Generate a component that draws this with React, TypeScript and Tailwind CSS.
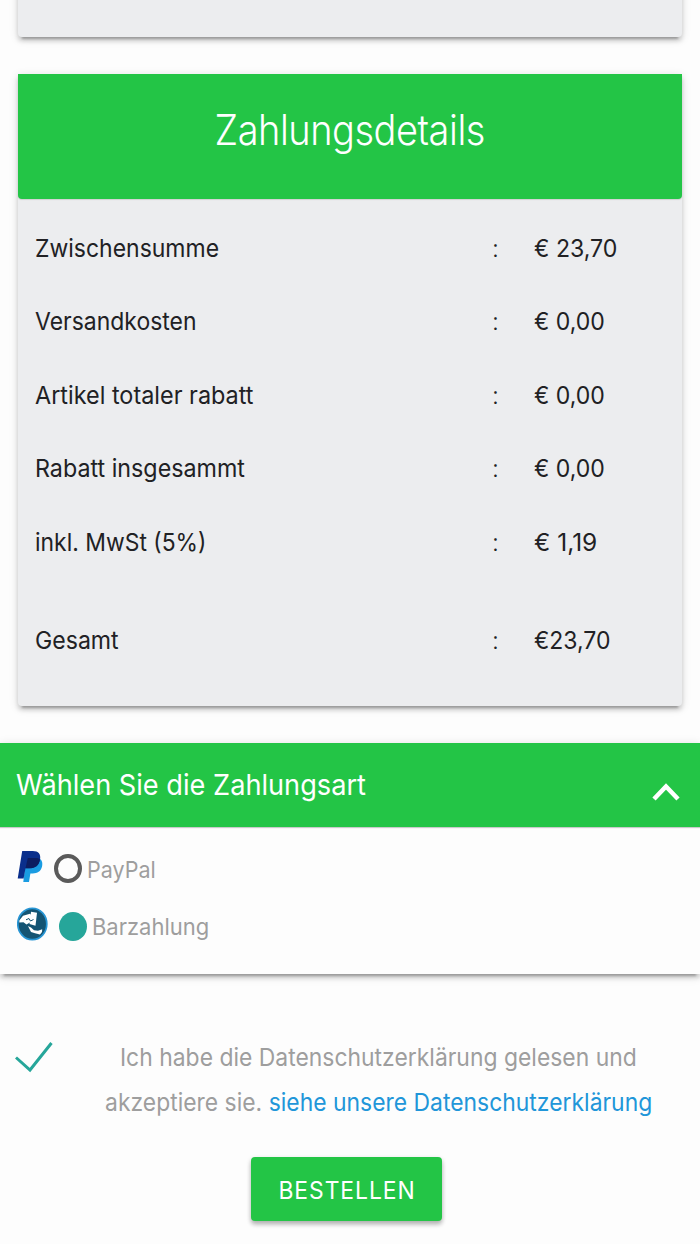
interface SummaryRow {
    label: string;
    value: string;
    labelClass: string;
    valueClass: string;
}

const rows: SummaryRow[] = [
    { label: 'Zwischensumme', value: '€ 23,70', labelClass: 'scale-x-[0.938]', valueClass: 'scale-x-[0.943]' },
    { label: 'Versandkosten', value: '€ 0,00', labelClass: 'scale-x-[0.937]', valueClass: 'scale-x-[0.94]' },
    { label: 'Artikel totaler rabatt', value: '€ 0,00', labelClass: 'scale-x-[0.956]', valueClass: 'scale-x-[0.94]' },
    { label: 'Rabatt insgesammt', value: '€ 0,00', labelClass: 'scale-x-[0.95]', valueClass: 'scale-x-[0.94]' },
    { label: 'inkl. MwSt (5%)', value: '€ 1,19', labelClass: 'scale-x-[0.935]', valueClass: '' },
];

const cardShadow = 'shadow-[0_4px_4px_0_rgba(0,0,0,0.14),0_6px_2px_-4px_rgba(0,0,0,0.22),0_2px_10px_0_rgba(0,0,0,0.14)]';

function PaypalIcon() {
    return (
        <svg width="27" height="33" viewBox="0 0 27 33" className="ml-[17px] shrink-0">
            <path d="M9 8h12c3.800 1.200 5 4.300 4 8.800-1.200 4.600-4.500 6.700-9.300 6.700h-2.300L12 32H6.300z" fill="#1a9ce2" />
            <path d="M5.200 1h10.500c6 0 8.300 3.300 7.400 8.300-1.100 6-4.700 9-10.800 9H8.500L6.600 28.500H0.700z" fill="#0a2f8c" />
            <path d="M10.800 8h9.400c1.100.3 2 .8 2.800 1.500-1.100 6-4.700 8.800-10.700 8.800H8.500z" fill="#0c1d60" />
        </svg>
    );
}

function CashIcon() {
    return (
        <svg width="31" height="34" viewBox="0 0 31 34" className="ml-[17px] shrink-0">
            <ellipse cx="15.300" cy="17" rx="14.500" ry="15.700" fill="#145473" stroke="#2795d4" strokeWidth="1.700" />
            <path d="M14 4.800L20 5.800L18.500 18.800L12.500 17z" fill="#fff" />
            <path d="M2.300 13.500L6 8.800L13 6.800L15.500 9.500L14.500 14.500L9.500 17.500L6.500 15.200L2.300 15.600z" fill="#fff" />
            <path d="M9 12.800L12 11.500L13.500 14L16.500 12.500" fill="none" stroke="#145473" strokeWidth="1" />
            <path d="M11 19L14 20.500L17 23.200L21 23.800L25.200 22.200L25 25L23 27.600L18 26.200L14 25z" fill="#fff" />
        </svg>
    );
}

export default function App() {
    return (
        <div className="h-[1244px] w-[700px] overflow-hidden bg-[#fdfdfd] font-['Inter',sans-serif] text-[24.500px] text-[#212124]">
            <div className={`mx-[18px] -mt-[40px] h-[77px] rounded-b-[4px] bg-[#ecedef] ${cardShadow}`} />

            <section className={`mx-[18px] mt-[37px] h-[632px] rounded-b-[4px] bg-[#ecedef] ${cardShadow}`}>
                <h1 className="flex h-[125px] items-start justify-center rounded-b-[4px] bg-[#23c546] pt-[31px] text-[42px] leading-[50px] font-light tracking-[-0.500px] text-white shadow-[0_1px_1px_rgba(0,0,0,0.12)]">
                    <span className="scale-x-[0.903]">Zahlungsdetails</span>
                </h1>
                <div className="pt-[12.700px]">
                    {rows.map((row) => (
                        <div key={row.label} className="grid h-[73.400px] grid-cols-[457px_42px_1fr] items-center pl-[17px]">
                            <span className={`origin-left justify-self-start ${row.labelClass}`}>{row.label}</span>
                            <span className="font-light">:</span>
                            <span className={`origin-left justify-self-start ${row.valueClass}`}>{row.value}</span>
                        </div>
                    ))}
                    <div className="mt-[25px] grid h-[73px] grid-cols-[457px_42px_1fr] items-center pl-[17px]">
                        <span className="origin-left scale-x-[0.943] justify-self-start">Gesamt</span>
                        <span className="font-light">:</span>
                        <span className="origin-left scale-x-[0.938] justify-self-start">€23,70</span>
                    </div>
                </div>
            </section>

            <section className={`mt-[37px] h-[231px] bg-[#fdfdfd] ${cardShadow}`}>
                <div className="flex h-[84px] items-center justify-between bg-[#23c546] pr-[20px] pl-[16px] text-[29px] text-white shadow-[0_1px_1px_rgba(0,0,0,0.2)]">
                    <span className="origin-left scale-x-[0.937]">Wählen Sie die Zahlungsart</span>
                    <svg width="28" height="18" viewBox="0 0 28 18" className="mt-[13px]">
                        <path d="M2 16L14 3.500L26 16" fill="none" stroke="#fff" strokeWidth="4.500" />
                    </svg>
                </div>
                <div className="mt-[23px] flex h-[33px] items-center text-[23px] text-[#9e9e9e]">
                    <PaypalIcon />
                    <span className="mt-[4px] ml-[10px] h-[29px] w-[28px] rounded-[50%] border-4 border-[#5a5a5a]" />
                    <span className="mt-[8px] ml-[5px] origin-left scale-x-[0.935]">PayPal</span>
                </div>
                <div className="mt-[24px] flex h-[34px] items-center text-[23px] text-[#9e9e9e]">
                    <CashIcon />
                    <span className="mt-[4px] ml-[11px] h-[29px] w-[28px] rounded-[50%] bg-[#26a69a]" />
                    <span className="mt-[7px] ml-[5px] origin-left scale-x-[0.955]">Barzahlung</span>
                </div>
            </section>

            <label className="mt-[61px] flex text-[#9e9e9e]">
                <svg width="38" height="32" viewBox="0 0 38 32" className="mt-[7px] ml-[15px] shrink-0">
                    <path d="M1 15.500L15 28L36.500 1" fill="none" stroke="#26a69a" strokeWidth="3" />
                </svg>
                <span className="ml-[30px] flex w-[590px] flex-col items-center leading-[45px] whitespace-nowrap">
                    <span className="scale-x-[0.935]">Ich habe die Datenschutzerklärung gelesen und</span>
                    <span className="ml-px scale-x-[0.935]">
                        akzeptiere sie. <a className="text-[#2196d9]">siehe unsere Datenschutzerklärung</a>
                    </span>
                </span>
            </label>

            <button className="mt-[32px] ml-[251px] flex h-[64px] w-[191px] items-center justify-center rounded-[4px] bg-[#23c546] pt-[3px] pl-px text-[24px] tracking-[1px] text-white shadow-[0_4px_4px_0_rgba(0,0,0,0.16),0_2px_5px_0_rgba(0,0,0,0.2)]">
                <span className="scale-x-[0.952]">BESTELLEN</span>
            </button>
        </div>
    );
}
